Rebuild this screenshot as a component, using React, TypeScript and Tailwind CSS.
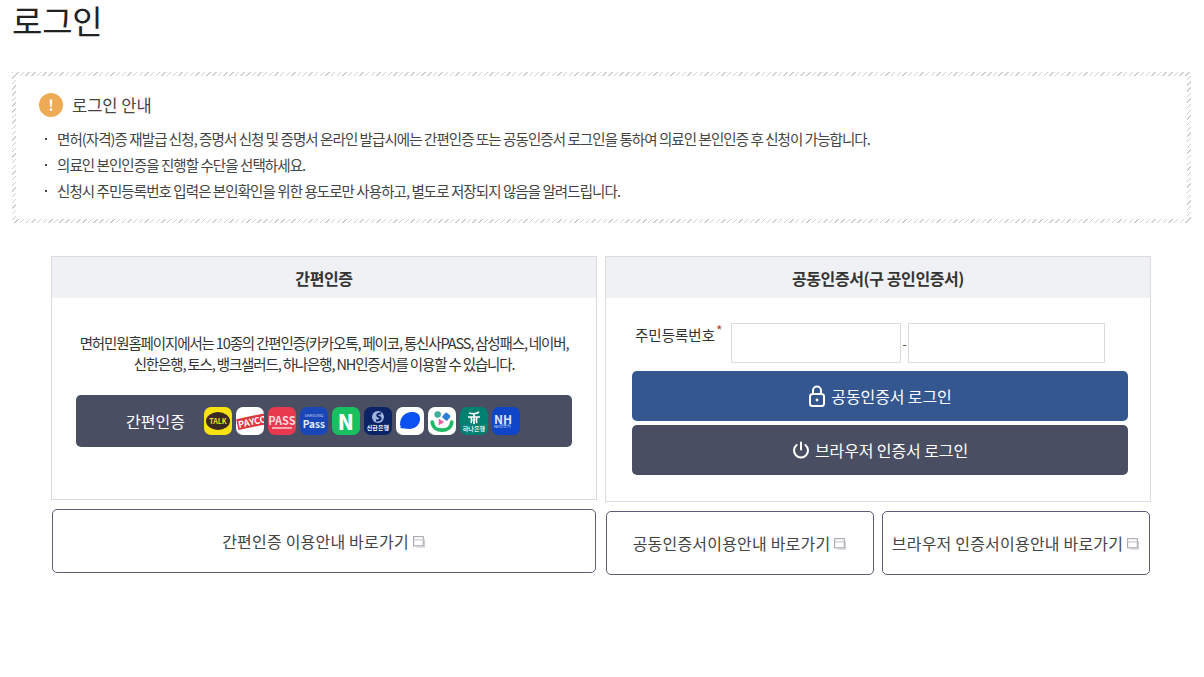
const font = { fontFamily: '"Noto Sans CJK KR", "Noto Sans", sans-serif' };

const notices = [
  "면허(자격)증 재발급 신청, 증명서 신청 및 증명서 온라인 발급시에는 간편인증 또는 공동인증서 로그인을 통하여 의료인 본인인증 후 신청이 가능합니다.",
  "의료인 본인인증을 진행할 수단을 선택하세요.",
  "신청시 주민등록번호 입력은 본인확인을 위한 용도로만 사용하고, 별도로 저장되지 않음을 알려드립니다.",
];

function NewWindowIcon() {
  return (
    <svg width="14" height="13" viewBox="0 0 13 12" fill="none" stroke="#a3a6ad" strokeWidth="1" className="ml-[3px] shrink-0">
      <rect x="1.5" y="1.5" width="9" height="8.5" />
      <path d="M1.5 4.5h9M11.5 4v7H4" stroke="#c9cbd0" />
    </svg>
  );
}

function LockIcon() {
  return (
    <svg width="18" height="22" viewBox="0 0 18 22" fill="none" stroke="#fff" strokeWidth="2" className="mr-[5px]">
      <rect x="2" y="9" width="14" height="12" rx="2.5" />
      <path d="M5 9V5.5a4 4 0 0 1 8 0V9" />
      <circle cx="9" cy="15" r="1.4" fill="#fff" stroke="none" />
    </svg>
  );
}

function PowerIcon() {
  return (
    <svg width="18" height="18" viewBox="0 0 18 18" fill="none" stroke="#fff" strokeWidth="2" strokeLinecap="round" className="mr-[5px]">
      <path d="M9 1.5v7" />
      <path d="M4.6 4a7 7 0 1 0 8.8 0" />
    </svg>
  );
}

function GuideLink({ label, className }: { label: string; className: string }) {
  return (
    <button className={`flex items-center justify-center rounded-[5px] border border-[#5b5d78] bg-white text-[16px] tracking-[0.2px] text-[#444] ${className}`}>
      {label}
      <NewWindowIcon />
    </button>
  );
}

function Tile({ className, children }: { className: string; children?: React.ReactNode }) {
  return (
    <div className={`flex h-7 w-7 shrink-0 items-center justify-center overflow-hidden rounded-[7px] ${className}`}>
      {children}
    </div>
  );
}

function AuthLogos() {
  return (
    <div className="flex gap-1">
      <Tile className="bg-[#f7e111]">
        <div className="flex h-[18px] w-[24px] items-center justify-center rounded-[50%] bg-[#3b2a20] text-[7px] font-bold text-[#f7e111]">TALK</div>
      </Tile>
      <Tile className="bg-white">
        <div className="ml-[5px] -rotate-12 whitespace-nowrap bg-[#e0343f] px-[1px] text-[9px] font-bold leading-[11px] text-white">PAYCO</div>
      </Tile>
      <Tile className="flex-col bg-[#e8394f]">
        <div className="text-[11px] font-bold leading-[12px] text-[#ffd9de]">PASS</div>
        <div className="mt-[1px] h-[2px] w-5 bg-[#f7a9b3]" />
      </Tile>
      <Tile className="flex-col bg-[#1a47b8]">
        <div className="text-[4px] leading-[5px] text-[#c9d6f7]">SAMSUNG</div>
        <div className="text-[10px] font-bold leading-[12px] text-[#e6edff]">Pass</div>
      </Tile>
      <Tile className="bg-[#17c15f]">
        <div className="text-[21px] font-black leading-none text-white">N</div>
      </Tile>
      <Tile className="flex-col bg-[#0b2467]">
        <svg width="14" height="14" viewBox="0 0 14 14">
          <circle cx="7" cy="7" r="6" fill="#9fb4dc" />
          <path d="M10 3.5C6 3 5 6 8 7s2 3.5-3 3.5" fill="none" stroke="#0b2467" strokeWidth="2" />
        </svg>
        <div className="text-[6px] font-bold leading-[8px] text-white">신한은행</div>
      </Tile>
      <Tile className="bg-white">
        <svg width="24" height="24" viewBox="0 0 24 24">
          <path d="M2 16C2 8 7 3 14 3c5 0 8 2 8 7 0 6-5 10-11 10-3 0-6-1-9-1 1-1 1-2 0-3z" fill="#0b50f0" />
        </svg>
      </Tile>
      <Tile className="bg-white">
        <svg width="26" height="26" viewBox="0 0 24 24">
          <circle cx="8" cy="6" r="3" fill="#3cae9c" />
          <rect x="13" y="5" width="6" height="6" rx="1" transform="rotate(40 16 8)" fill="#2f7fd6" />
          <path d="M9 10l5 3-5 3z" fill="#ec5fa0" />
          <path d="M3 13c1 10 17 10 18 0" fill="none" stroke="#1fb866" strokeWidth="3.4" strokeLinecap="round" />
        </svg>
      </Tile>
      <Tile className="flex-col bg-[#00806f]">
        <svg width="16" height="15" viewBox="0 0 16 15" fill="none" stroke="#fff" strokeWidth="1.7">
          <path d="M3 3c3 1 7 1 10-1M2 7h12M8 3v11M5 7c1 2 1 4 0 6M11 7c-1 2-1 4 0 6" />
        </svg>
        <div className="text-[6px] font-bold leading-[8px] text-[#e4f5f1]">하나은행</div>
      </Tile>
      <Tile className="flex-col items-start bg-[#0f45c8] pl-[2px]">
        <div className="text-[12px] font-bold leading-[11px] text-[#dbe6ff]">NH</div>
        <div className="text-[4px] leading-[5px] whitespace-nowrap text-[#dbe6ff]">NH인증서</div>
      </Tile>
    </div>
  );
}

export default function App() {
  return (
    <div className="min-h-[677px] bg-white px-3 text-[#333]" style={font}>
      <h1 className="h-[72px] text-[33px] font-normal leading-[40px] tracking-[-0.2px] text-[#222]">로그인</h1>

      {/* 안내 */}
      <div className="h-[151px] w-[1179px] bg-[repeating-linear-gradient(135deg,#cfcfcf_0,#cfcfcf_1px,#ffffff_1px,#ffffff_4px)] p-[4px]">
        <div className="h-full bg-white pl-[23px] pt-[17px]">
          <div className="flex items-center">
            <div className="flex h-6 w-6 items-center justify-center rounded-full bg-[#eeab55] text-[15px] font-bold text-white">!</div>
            <span className="ml-[9px] text-[16.5px] leading-6 text-[#444]">로그인 안내</span>
          </div>
          <ul className="mt-[9px]">
            {notices.map((text) => (
              <li key={text} className="flex h-[26px] items-center text-[14.5px] tracking-[-0.93px] text-[#444]">
                <span className="ml-[6px] mr-[10px] h-[2px] w-[2px] shrink-0 bg-[#444]" />
                {text}
              </li>
            ))}
          </ul>
        </div>
      </div>

      <div className="ml-[39px] mt-[33px] grid w-[1100px] grid-cols-[546px_546px] gap-x-2">
        {/* 간편인증 */}
        <div className="flex flex-col">
          <div className="h-[244px] border border-[#dcdcdc]">
            <div className="flex h-[41px] items-center justify-center bg-[#f0f1f5] text-[16px] font-bold tracking-[-0.4px] text-[#333]">간편인증</div>
            <p className="mt-[34px] text-center text-[14.5px] leading-[21px] tracking-[-1.15px] text-[#333]">
              면허민원홈페이지에서는 10종의 간편인증(카카오톡, 페이코, 통신사PASS, 삼성패스, 네이버,
              <br />
              신한은행, 토스, 뱅크샐러드, 하나은행, NH인증서)를 이용할 수 있습니다.
            </p>
            <button className="ml-6 mt-[21px] flex h-[52px] w-[496px] items-center rounded-[5px] bg-[#4a4e63] pl-[50px] text-[16px] text-white">
              <span className="mr-[19px]">간편인증</span>
              <AuthLogos />
            </button>
          </div>
          <GuideLink label="간편인증 이용안내 바로가기" className="mt-[9px] h-[64px] w-[544px] self-center" />
        </div>

        {/* 공동인증서 */}
        <div className="flex flex-col">
          <div className="h-[246px] border border-[#dcdcdc]">
            <div className="flex h-[41px] items-center justify-center bg-[#f0f1f5] text-[16px] font-bold tracking-[-0.4px] text-[#333]">공동인증서(구 공인인증서)</div>
            <div className="ml-[29px] mt-[25px] flex items-start">
              <label className="mt-[2px] flex w-[96px] text-[14.5px] leading-5 text-[#333]">
                주민등록번호<span className="ml-px -mt-[5px] text-[14px] text-[#b5502e]">*</span>
              </label>
              <input className="h-10 w-[170px] border border-[#dcdcdc] bg-white" />
              <span className="mt-[11px] w-[7px] text-center text-[12px] leading-5">-</span>
              <input className="h-10 w-[197px] border border-[#dcdcdc] bg-white" />
            </div>
            <button className="ml-[26px] mt-2 flex h-[50px] w-[496px] items-center justify-center rounded-[5px] bg-[#34578f] text-[16px] tracking-[-0.1px] text-white">
              <LockIcon />
              공동인증서 로그인
            </button>
            <button className="ml-[26px] mt-1 flex h-[50px] w-[496px] items-center justify-center rounded-[5px] bg-[#4a4e63] text-[16px] tracking-[-0.1px] text-white">
              <PowerIcon />
              브라우저 인증서 로그인
            </button>
          </div>
          <div className="mx-px mt-[9px] flex gap-2">
            <GuideLink label="공동인증서이용안내 바로가기" className="h-[64px] w-[268px]" />
            <GuideLink label="브라우저 인증서이용안내 바로가기" className="h-[64px] w-[268px]" />
          </div>
        </div>
      </div>
    </div>
  );
}
